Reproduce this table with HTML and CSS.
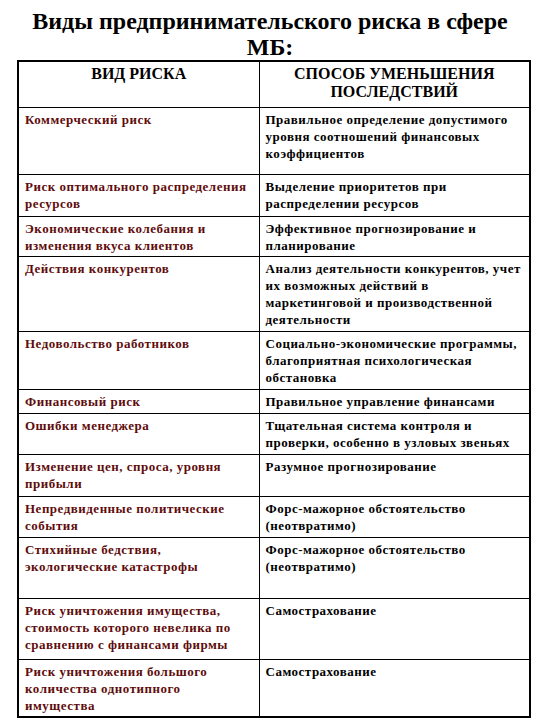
FILE: index.html
```html
<!DOCTYPE html>
<html lang="ru">
<head>
<meta charset="utf-8">
<link rel="stylesheet" href="styles.css">
</head>
<body>
<h1 class="title">Виды предпринимательского риска в сфере<br>МБ:</h1>
<table class="risks">
  <colgroup><col class="k1"><col class="k2"></colgroup>
  <tr class="head h46">
    <th>ВИД РИСКА</th>
    <th>СПОСОБ УМЕНЬШЕНИЯ<br>ПОСЛЕДСТВИЙ</th>
  </tr>
  <tr class="h67"><td class="c1">Коммерческий риск</td><td>Правильное определение допустимого<br>уровня соотношений финансовых<br>коэффициентов</td></tr>
  <tr class="h42"><td class="c1">Риск оптимального распределения<br>ресурсов</td><td>Выделение приоритетов при<br>распределении ресурсов</td></tr>
  <tr class="h40"><td class="c1">Экономические колебания и<br>изменения вкуса клиентов</td><td>Эффективное прогнозирование и<br>планирование</td></tr>
  <tr class="h75"><td class="c1">Действия конкурентов</td><td>Анализ деятельности конкурентов, учет<br>их возможных действий в<br>маркетинговой и производственной<br>деятельности</td></tr>
  <tr class="h58"><td class="c1">Недовольство работников</td><td>Социально-экономические программы,<br>благоприятная психологическая<br>обстановка</td></tr>
  <tr class="h24"><td class="c1">Финансовый риск</td><td>Правильное управление финансами</td></tr>
  <tr class="h41"><td class="c1">Ошибки менеджера</td><td>Тщательная система контроля и<br>проверки, особенно в узловых звеньях</td></tr>
  <tr class="h42"><td class="c1">Изменение цен, спроса, уровня<br>прибыли</td><td>Разумное прогнозирование</td></tr>
  <tr class="h41"><td class="c1">Непредвиденные политические<br>события</td><td>Форс-мажорное обстоятельство<br>(неотвратимо)</td></tr>
  <tr class="h61"><td class="c1">Стихийные бедствия,<br>экологические катастрофы</td><td>Форс-мажорное обстоятельство<br>(неотвратимо)</td></tr>
  <tr class="h61"><td class="c1">Риск уничтожения имущества,<br>стоимость которого невелика по<br>сравнению с финансами фирмы</td><td>Самострахование</td></tr>
  <tr class="h58"><td class="c1">Риск уничтожения большого<br>количества однотипного<br>имущества</td><td>Самострахование</td></tr>
</table>
</body>
</html>
```
FILE: styles.css
```css
html, body {
  margin: 0;
  padding: 0;
  background: #ffffff;
}
body {
  font-family: "Liberation Serif", "Times New Roman", serif;
  color: #000;
}
.title {
  margin: 8px 0 0;
  font-size: 24px;
  line-height: 26px;
  height: 52px;
  font-weight: bold;
  text-align: center;
  white-space: nowrap;
}
.risks {
  margin-left: 17px;
  width: 512px;
  border-collapse: collapse;
  border: 2px solid #000;
  table-layout: fixed;
}
.k1 { width: 241px; }
.k2 { width: 271px; }
.risks th, .risks td {
  border: 1px solid #000;
  vertical-align: top;
  padding: 3px 0 0 6px;
  font-weight: bold;
  font-size: 13px;
  line-height: 17px;
  letter-spacing: 0.5px;
  text-align: left;
  white-space: nowrap;
  overflow: hidden;
}
.risks td.c1 { color: #600c0c; }
.risks th {
  text-align: center;
  font-size: 16px;
  line-height: 18px;
  letter-spacing: 0;
  padding: 3px 0 0;
}
.h24 { height: 24px; }
.h40 { height: 40px; }
.h41 { height: 41px; }
.h42 { height: 42px; }
.h46 { height: 46px; }
.h58 { height: 58px; }
.h61 { height: 61px; }
.h67 { height: 67px; }
.h75 { height: 75px; }
```
